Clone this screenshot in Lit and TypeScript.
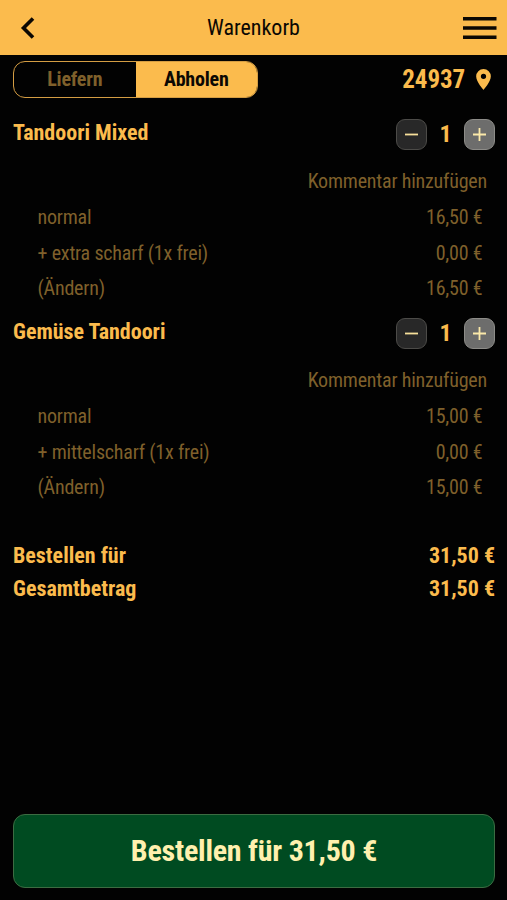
import { LitElement, html, css } from "lit";
import { customElement, property } from "lit/decorators.js";

interface Line { label: string; price: string }
interface Dish { name: string; count: number; lines: Line[] }

const dishes: Dish[] = [
  {
    name: "Tandoori Mixed",
    count: 1,
    lines: [
      { label: "normal", price: "16,50 €" },
      { label: "+ extra scharf (1x frei)", price: "0,00 €" },
      { label: "(Ändern)", price: "16,50 €" },
    ],
  },
  {
    name: "Gemüse Tandoori",
    count: 1,
    lines: [
      { label: "normal", price: "15,00 €" },
      { label: "+ mittelscharf (1x frei)", price: "0,00 €" },
      { label: "(Ändern)", price: "15,00 €" },
    ],
  },
];

@customElement("cart-item")
class CartItem extends LitElement {
  @property({ attribute: false }) dish!: Dish;

  static styles = css`
    :host { display: block; height: 199px; }
    .head { display: flex; align-items: center; height: 36px; padding: 0 12px 0 13px; }
    .name { flex: 1; font-size: 22px; font-weight: 700; line-height: 32px; margin-top: -3px; }
    .step {
      box-sizing: border-box; width: 31px; height: 31px; border-radius: 9px;
      border: 1px solid #4c4b48; background: #282828; display: grid; place-items: center;
    }
    .step.plus { background: #6d6d6c; border-color: #8d8c88; }
    .count { width: 37px; text-align: center; font-size: 24px; font-weight: 700; line-height: 31px; }
    .comment, .line { font-size: 20px; letter-spacing: -0.2px; color: #7f602b; }
    .comment { text-align: right; padding-right: 20px; margin-top: 11px; height: 36px; line-height: 36px; }
    .line { display: flex; justify-content: space-between; height: 35.5px; line-height: 36px; padding: 0 24.5px 0 37.5px; }
  `;

  render() {
    const d = this.dish;
    return html`
      <div class="head">
        <span class="name">${d.name}</span>
        <span class="step"><svg width="15" height="15" viewBox="0 0 15 15"><path d="M1 7.5H14" stroke="#f6df9a" stroke-width="1.8" /></svg></span>
        <span class="count">${d.count}</span>
        <span class="step plus"><svg width="15" height="15" viewBox="0 0 15 15"><path d="M1 7.5H14M7.5 1V14" stroke="#fbe9a9" stroke-width="1.8" /></svg></span>
      </div>
      <div class="comment">Kommentar hinzufügen</div>
      ${d.lines.map((l) => html`<div class="line"><span>${l.label}</span><span>${l.price}</span></div>`)}
    `;
  }
}

@customElement("app-root")
class AppRoot extends LitElement {
  static styles = css`
    :host {
      display: flex; flex-direction: column; box-sizing: border-box; height: 900px; overflow: hidden;
      background: #020202; color: #fbbb4d;
      font-family: "Roboto Condensed", Roboto, sans-serif; font-stretch: 75%;
    }
    .bar {
      box-sizing: border-box; height: 54.5px; background: #fbbb4d; color: #0b0803;
      display: grid; grid-template-columns: 60px 1fr 60px; align-items: center; flex: none;
    }
    .back { margin: 2px 0 0 20px; display: block; }
    .title { text-align: center; font-size: 22px; line-height: 52px; padding-top: 2px; }
    .menu { margin: 2px 0 0 16px; display: block; }
    .mode { display: flex; justify-content: space-between; align-items: center; height: 37px; margin-top: 6.5px; padding: 0 16.5px 0 13px; flex: none; }
    .toggle {
      box-sizing: border-box; display: flex; width: 245px; height: 37px; border: 1.5px solid #d49d43;
      border-radius: 12px; overflow: hidden; font-size: 20px; font-weight: 700; line-height: 35px;
      text-align: center; letter-spacing: -0.2px;
    }
    .off { flex: 1; color: #7f602b; }
    .on { flex: 1; background: #fbbb4d; color: #0b0803; }
    .place { display: flex; align-items: center; gap: 10.5px; font-size: 25px; font-weight: 700; line-height: 35px; letter-spacing: -0.1px; }
    .pin { display: block; margin-top: -1px; }
    .items { margin-top: 18px; flex: none; }
    .totals { margin-top: 24.5px; padding: 0 12px 0 13px; font-size: 22px; font-weight: 700; line-height: 33px; }
    .total { display: flex; justify-content: space-between; }
    .order {
      box-sizing: border-box; height: 74px; margin: auto 12px 12px 13px; border: 1.5px solid #3c6c42; border-radius: 12px;
      background: #004b21; color: #fff0ae; text-align: center; font-size: 30px; font-weight: 700; line-height: 71px;
      letter-spacing: -0.22px; flex: none;
    }
  `;

  render() {
    return html`
      <header class="bar">
        <svg class="back" width="16" height="22" viewBox="0 0 16 22"><path d="M13 1.5L3.5 11L13 20.5" fill="none" stroke="#0b0803" stroke-width="3.6" /></svg>
        <span class="title">Warenkorb</span>
        <svg class="menu" width="34" height="24" viewBox="0 0 34 24"><path d="M0 2.7H33.5M0 12H33.5M0 21.2H33.5" stroke="#0b0803" stroke-width="3.6" /></svg>
      </header>
      <section class="mode">
        <div class="toggle"><span class="off">Liefern</span><span class="on">Abholen</span></div>
        <div class="place">
          <span>24937</span>
          <svg class="pin" width="15" height="21" viewBox="0 0 14 20"><path fill="#fbbb4d" fill-rule="evenodd" d="M7 0A7 7 0 0 0 0 7C0 12.25 7 20 7 20S14 12.25 14 7A7 7 0 0 0 7 0ZM7 9.5A2.5 2.5 0 1 1 7 4.5A2.5 2.5 0 0 1 7 9.5Z" /></svg>
        </div>
      </section>
      <section class="items">${dishes.map((d) => html`<cart-item .dish=${d}></cart-item>`)}</section>
      <section class="totals">
        <div class="total"><span>Bestellen für</span><span>31,50 €</span></div>
        <div class="total"><span>Gesamtbetrag</span><span>31,50 €</span></div>
      </section>
      <div class="order">Bestellen für 31,50 €</div>
    `;
  }
}
